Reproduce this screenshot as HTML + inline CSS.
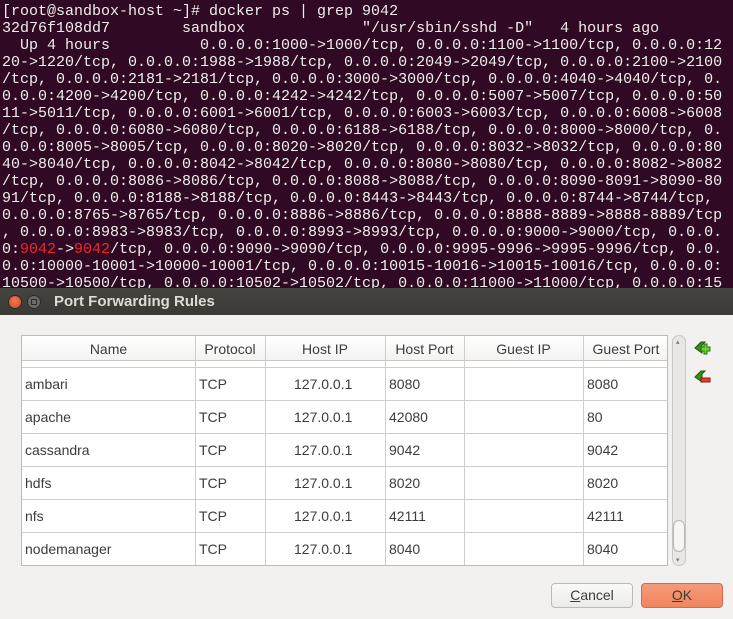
<!DOCTYPE html>
<html><head><meta charset="utf-8">
<style>
*{margin:0;padding:0;box-sizing:border-box}
body{width:733px;height:619px;overflow:hidden;background:#300a24;position:relative;font-family:"Liberation Sans","DejaVu Sans",sans-serif}
#term{position:absolute;left:2px;top:3px;font:15px/17px "Liberation Mono",monospace;color:#eeeeec;white-space:pre}
.r{color:#ef2929}
#dlg{position:absolute;left:0;top:288px;width:733px;height:331px;background:#f2f1f0}
#tb{position:absolute;left:0;top:0;width:733px;height:27px;background:linear-gradient(#45443f,#3a3935);color:#dfdbd2;font-weight:bold;font-size:15px}
#tb span{position:absolute;left:54px;top:5px}
.cb{position:absolute;top:7px;width:14px;height:14px;border-radius:50%}
#tbl{position:absolute;left:21px;top:47px;width:647px;height:231px;border:1px solid #bdbbb7;background:#fff;overflow:hidden}
.c{position:absolute;font-size:14px;color:#3c3c3c}
.vl{position:absolute;top:0;width:1px;height:231px;background:#d0cecb}
.hl{position:absolute;left:0;width:647px;height:1px;background:#d0cecb}
.btn{position:absolute;top:295px;height:25px;border-radius:4px;font-size:14px;text-align:center;line-height:23px}
</style></head><body>
<div id="term">[root@sandbox-host ~]# docker ps | grep 9042
32d76f108dd7        sandbox             "/usr/sbin/sshd -D"   4 hours ago
  Up 4 hours          0.0.0.0:1000-&gt;1000/tcp, 0.0.0.0:1100-&gt;1100/tcp, 0.0.0.0:12
20-&gt;1220/tcp, 0.0.0.0:1988-&gt;1988/tcp, 0.0.0.0:2049-&gt;2049/tcp, 0.0.0.0:2100-&gt;2100
/tcp, 0.0.0.0:2181-&gt;2181/tcp, 0.0.0.0:3000-&gt;3000/tcp, 0.0.0.0:4040-&gt;4040/tcp, 0.
0.0.0:4200-&gt;4200/tcp, 0.0.0.0:4242-&gt;4242/tcp, 0.0.0.0:5007-&gt;5007/tcp, 0.0.0.0:50
11-&gt;5011/tcp, 0.0.0.0:6001-&gt;6001/tcp, 0.0.0.0:6003-&gt;6003/tcp, 0.0.0.0:6008-&gt;6008
/tcp, 0.0.0.0:6080-&gt;6080/tcp, 0.0.0.0:6188-&gt;6188/tcp, 0.0.0.0:8000-&gt;8000/tcp, 0.
0.0.0:8005-&gt;8005/tcp, 0.0.0.0:8020-&gt;8020/tcp, 0.0.0.0:8032-&gt;8032/tcp, 0.0.0.0:80
40-&gt;8040/tcp, 0.0.0.0:8042-&gt;8042/tcp, 0.0.0.0:8080-&gt;8080/tcp, 0.0.0.0:8082-&gt;8082
/tcp, 0.0.0.0:8086-&gt;8086/tcp, 0.0.0.0:8088-&gt;8088/tcp, 0.0.0.0:8090-8091-&gt;8090-80
91/tcp, 0.0.0.0:8188-&gt;8188/tcp, 0.0.0.0:8443-&gt;8443/tcp, 0.0.0.0:8744-&gt;8744/tcp,
0.0.0.0:8765-&gt;8765/tcp, 0.0.0.0:8886-&gt;8886/tcp, 0.0.0.0:8888-8889-&gt;8888-8889/tcp
, 0.0.0.0:8983-&gt;8983/tcp, 0.0.0.0:8993-&gt;8993/tcp, 0.0.0.0:9000-&gt;9000/tcp, 0.0.0.
0:<span class="r">9042</span>-&gt;<span class="r">9042</span>/tcp, 0.0.0.0:9090-&gt;9090/tcp, 0.0.0.0:9995-9996-&gt;9995-9996/tcp, 0.0.
0.0:10000-10001-&gt;10000-10001/tcp, 0.0.0.0:10015-10016-&gt;10015-10016/tcp, 0.0.0.0:
10500-&gt;10500/tcp, 0.0.0.0:10502-&gt;10502/tcp, 0.0.0.0:11000-&gt;11000/tcp, 0.0.0.0:15</div>
<div id="dlg">
 <div id="tb">
  <div class="cb" style="left:8px;background:radial-gradient(circle at 50% 40%,#f07850,#d04a20);border:1px solid #2a2a28"></div>
  <div class="cb" style="left:27px;background:#6b6a65;border:1px solid #2a2a28"></div>
  <div style="position:absolute;left:31px;top:11px;width:6px;height:6px;border:1px solid #2e2d2a"></div>
  <span>Port Forwarding Rules</span>
 </div>
 <div id="tbl">
  <div style="position:absolute;left:0;top:0;width:647px;height:25px;background:linear-gradient(#fff,#f4f3f2);border-bottom:1px solid #c8c6c3"></div>
  <div class="vl" style="left:173px"></div><div class="vl" style="left:243px"></div><div class="vl" style="left:363px"></div><div class="vl" style="left:442px"></div><div class="vl" style="left:561px"></div>
  <div class="c" style="left:0;width:173px;text-align:center;top:5px">Name</div>
  <div class="c" style="left:173px;width:70px;text-align:center;top:5px">Protocol</div>
  <div class="c" style="left:243px;width:120px;text-align:center;top:5px">Host IP</div>
  <div class="c" style="left:363px;width:79px;text-align:center;top:5px">Host Port</div>
  <div class="c" style="left:442px;width:119px;text-align:center;top:5px">Guest IP</div>
  <div class="c" style="left:561px;width:86px;text-align:center;top:5px">Guest Port</div>
  <div class="hl" style="top:31px"></div><div class="hl" style="top:64px"></div><div class="hl" style="top:97px"></div><div class="hl" style="top:130px"></div><div class="hl" style="top:163px"></div><div class="hl" style="top:196px"></div>
  <div class="c" style="left:3px;top:40px">ambari</div><div class="c" style="left:177px;top:40px">TCP</div><div class="c" style="left:272px;top:40px">127.0.0.1</div><div class="c" style="left:367px;top:40px">8080</div><div class="c" style="left:565px;top:40px">8080</div>
  <div class="c" style="left:3px;top:73px">apache</div><div class="c" style="left:177px;top:73px">TCP</div><div class="c" style="left:272px;top:73px">127.0.0.1</div><div class="c" style="left:367px;top:73px">42080</div><div class="c" style="left:565px;top:73px">80</div>
  <div class="c" style="left:3px;top:106px">cassandra</div><div class="c" style="left:177px;top:106px">TCP</div><div class="c" style="left:272px;top:106px">127.0.0.1</div><div class="c" style="left:367px;top:106px">9042</div><div class="c" style="left:565px;top:106px">9042</div>
  <div class="c" style="left:3px;top:139px">hdfs</div><div class="c" style="left:177px;top:139px">TCP</div><div class="c" style="left:272px;top:139px">127.0.0.1</div><div class="c" style="left:367px;top:139px">8020</div><div class="c" style="left:565px;top:139px">8020</div>
  <div class="c" style="left:3px;top:172px">nfs</div><div class="c" style="left:177px;top:172px">TCP</div><div class="c" style="left:272px;top:172px">127.0.0.1</div><div class="c" style="left:367px;top:172px">42111</div><div class="c" style="left:565px;top:172px">42111</div>
  <div class="c" style="left:3px;top:205px">nodemanager</div><div class="c" style="left:177px;top:205px">TCP</div><div class="c" style="left:272px;top:205px">127.0.0.1</div><div class="c" style="left:367px;top:205px">8040</div><div class="c" style="left:565px;top:205px">8040</div>
 </div>
 <div style="position:absolute;left:672px;top:47px;width:14px;height:231px;border:1px solid #c9c7c3;border-radius:7px;background:#e8e7e5"></div>
 <div style="position:absolute;left:673px;top:232px;width:12px;height:32px;border:1px solid #b8b6b2;border-radius:6px;background:#f6f5f4"></div>
 <div style="position:absolute;left:676px;top:50px;font-size:7px;color:#777">▴</div>
 <div style="position:absolute;left:676px;top:268px;font-size:7px;color:#777">▾</div>
 <svg style="position:absolute;left:694px;top:53px" width="18" height="16"><path d="M1 7 L7 1 H11 L8 4 V12 L1 7Z" fill="#3a8c1a" stroke="#1f5a0a"/><path d="M10 3h3v3h3v4h-3v3h-3v-3h-3v-4h3z" fill="#6bd12e" stroke="#2e6e12"/></svg>
 <svg style="position:absolute;left:694px;top:82px" width="18" height="16"><path d="M1 7 L7 1 H11 L8 4 V12 L1 7Z" fill="#3a8c1a" stroke="#1f5a0a"/><rect x="7" y="8" width="9" height="4" fill="#e04030" stroke="#8a1a10"/></svg>
 <div class="btn" style="left:551px;width:82px;border:1px solid #bdbab5;background:linear-gradient(#fafafa,#ecebe9);color:#3c3c3c"><u>C</u>ancel</div>
 <div class="btn" style="left:641px;width:82px;border:1px solid #d0704a;background:linear-gradient(#f59a78,#f08660);color:#3c3c3c"><u>O</u>K</div>
</div>
</body></html>
